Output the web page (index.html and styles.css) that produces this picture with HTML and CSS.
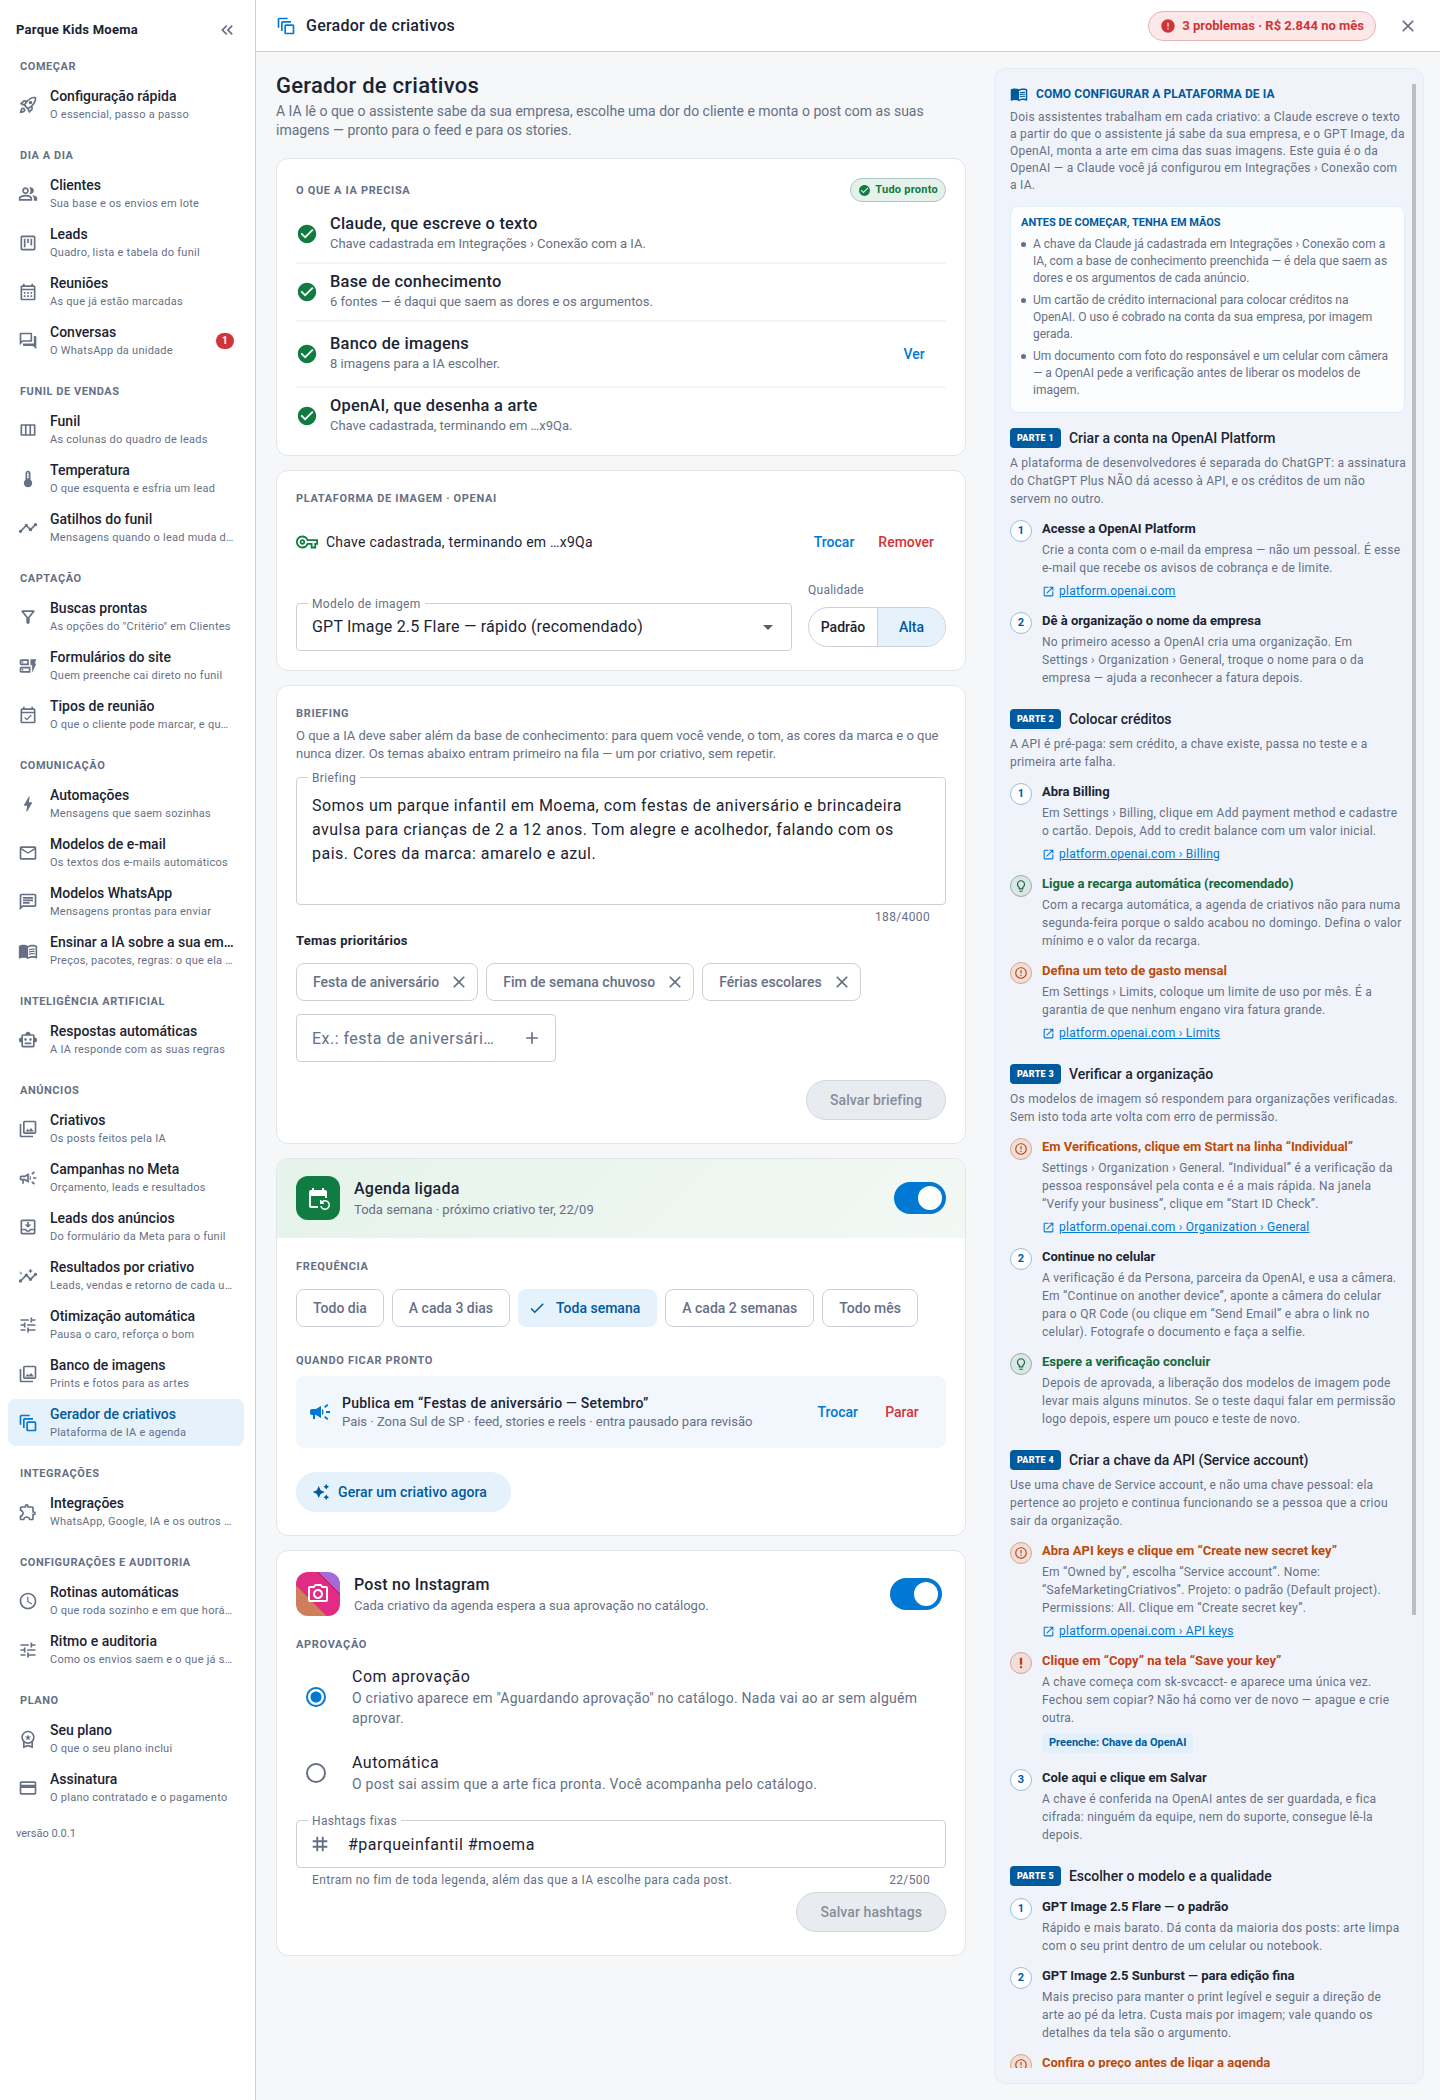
FILE: index.html
```
<!DOCTYPE html>
<html lang="pt-BR">
<head>
  <meta charset="UTF-8">
  <meta name="viewport" content="width=device-width, initial-scale=1">
  <title>Gerador de criativos</title>
  <link rel="stylesheet" href="styles.css">
</head>
<body>
  <svg class="sprite" aria-hidden="true">
    <symbol id="i-rocket" viewBox="0 0 24 24"><path d="M6 15c-.83 0-1.58.34-2.12.88C2.7 17.06 2 22 2 22s4.94-.7 6.12-1.88A2.996 2.996 0 0 0 6 15zm.71 3.71c-.28.28-2.17.76-2.17.76s.47-1.88.76-2.17c.17-.19.42-.3.7-.3a1.003 1.003 0 0 1 .71 1.71zM17.42 13.65c6.36-6.36 4.24-11.31 4.24-11.31S16.71.22 10.35 6.58l-2.49-.5a2.03 2.03 0 0 0-1.81.55L2 10.69l5 2.14L11.17 17l2.14 5 4.05-4.05c.47-.47.68-1.15.55-1.81l-.49-2.49zM7.41 10.83l-1.91-.82 1.97-1.97 1.44.29c-.57.83-1.08 1.7-1.5 2.5zm6.58 7.67l-.82-1.91c.8-.42 1.67-.93 2.49-1.5l.29 1.44-1.96 1.97zM16 12.24c-1.32 1.32-3.38 2.4-4.04 2.73l-2.93-2.93c.32-.65 1.4-2.71 2.73-4.04 4.68-4.68 8.23-3.99 8.23-3.99s.69 3.55-3.99 8.23zM15 11c1.1 0 2-.9 2-2s-.9-2-2-2-2 .9-2 2 .9 2 2 2z"/></symbol>
    <symbol id="i-group" viewBox="0 0 24 24"><path d="M16.67 13.13C18.04 14.06 19 15.32 19 17v3h4v-3c0-2.18-3.57-3.47-6.33-3.87zM15 12c2.21 0 4-1.79 4-4s-1.79-4-4-4c-.47 0-.91.1-1.33.24C14.5 5.27 15 6.58 15 8s-.5 2.73-1.33 3.76c.42.14.86.24 1.33.24zM9 12c2.21 0 4-1.79 4-4s-1.79-4-4-4-4 1.79-4 4 1.79 4 4 4zm0-6c1.1 0 2 .9 2 2s-.9 2-2 2-2-.9-2-2 .9-2 2-2zM9 13c-2.67 0-8 1.34-8 4v3h16v-3c0-2.66-5.33-4-8-4zm6 5H3v-.99C3.2 16.29 6.3 15 9 15s5.8 1.29 6 2v1z"/></symbol>
    <symbol id="i-kanban" viewBox="0 0 24 24"><path d="M19 3H5c-1.1 0-2 .9-2 2v14c0 1.1.9 2 2 2h14c1.1 0 2-.9 2-2V5c0-1.1-.9-2-2-2zm0 16H5V5h14v14zM7 7h2v10H7zM11 7h2v5h-2zM15 7h2v8h-2z"/></symbol>
    <symbol id="i-calendar" viewBox="0 0 24 24"><path d="M19 4h-1V2h-2v2H8V2H6v2H5c-1.11 0-1.99.9-1.99 2L3 20a2 2 0 0 0 2 2h14c1.1 0 2-.9 2-2V6c0-1.1-.9-2-2-2zm0 16H5V10h14v10zm0-12H5V6h14v2zM9 14H7v-2h2v2zm4 0h-2v-2h2v2zm4 0h-2v-2h2v2zm-8 4H7v-2h2v2zm4 0h-2v-2h2v2zm4 0h-2v-2h2v2z"/></symbol>
    <symbol id="i-forum" viewBox="0 0 24 24"><path d="M15 4v7H5.17L4 12.17V4h11m1-2H3c-.55 0-1 .45-1 1v14l4-4h10c.55 0 1-.45 1-1V3c0-.55-.45-1-1-1zm5 4h-2v9H6v2c0 .55.45 1 1 1h11l4 4V7c0-.55-.45-1-1-1z"/></symbol>
    <symbol id="i-columns" viewBox="0 0 24 24"><path fill-rule="evenodd" d="M4 5h16c.6 0 1 .4 1 1v12c0 .6-.4 1-1 1H4c-.6 0-1-.4-1-1V6c0-.6.4-1 1-1zm1 2v10h3.3V7zm5.3 0v10h3.4V7zm5.4 0v10H19V7z"/></symbol>
    <symbol id="i-thermo" viewBox="0 0 24 24"><path d="M15 13V5c0-1.66-1.34-3-3-3S9 3.34 9 5v8c-1.21.91-2 2.37-2 4 0 2.76 2.24 5 5 5s5-2.24 5-5c0-1.63-.79-3.09-2-4zm-4-8c0-.55.45-1 1-1s1 .45 1 1h-1v1h1v2h-1v1h1v2h-2V5z"/></symbol>
    <symbol id="i-timeline" viewBox="0 0 24 24"><path d="M23 8c0 1.1-.9 2-2 2-.18 0-.35-.02-.51-.07l-3.56 3.55c.05.16.07.34.07.52 0 1.1-.9 2-2 2s-2-.9-2-2c0-.18.02-.36.07-.52l-2.55-2.55c-.16.05-.34.07-.52.07s-.36-.02-.52-.07l-4.55 4.56c.05.16.07.33.07.51 0 1.1-.9 2-2 2s-2-.9-2-2 .9-2 2-2c.18 0 .35.02.51.07l4.56-4.55C8.02 9.36 8 9.18 8 9c0-1.1.9-2 2-2s2 .9 2 2c0 .18-.02.36-.07.52l2.55 2.55c.16-.05.34-.07.52-.07s.36.02.52.07l3.55-3.56C19.02 8.35 19 8.18 19 8c0-1.1.9-2 2-2s2 .9 2 2z"/></symbol>
    <symbol id="i-filter" viewBox="0 0 24 24"><path d="M7 6h10l-5.01 6.3L7 6zm-2.75-.39C6.27 8.2 10 13 10 13v6c0 .55.45 1 1 1h2c.55 0 1-.45 1-1v-6s3.72-4.8 5.74-7.39A.998.998 0 0 0 18.95 4H5.04c-.83 0-1.3.95-.79 1.61z"/></symbol>
    <symbol id="i-form" viewBox="0 0 24 24"><path fill-rule="evenodd" d="M17 20v-9h-2V4h7l-2 5h2zM15 13v7H4c-1.1 0-2-.9-2-2v-3c0-1.1.9-2 2-2zm-2 2H4v3h9zM13 4v7H4c-1.1 0-2-.9-2-2V6c0-1.1.9-2 2-2zm-2 2H4v3h7zM4.7 6.7h1.6v1.6H4.7zM4.7 15.7h1.6v1.6H4.7z"/></symbol>
    <symbol id="i-event" viewBox="0 0 24 24"><path d="M19 4h-1V2h-2v2H8V2H6v2H5c-1.11 0-1.99.9-1.99 2L3 20c0 1.1.89 2 2 2h14c1.1 0 2-.9 2-2V6c0-1.1-.9-2-2-2zm0 16H5V10h14v10zm0-12H5V6h14v2zm-8.44 10.5l5.94-5.94-1.06-1.06-4.88 4.88-2.12-2.12-1.06 1.06z"/></symbol>
    <symbol id="i-bolt" viewBox="0 0 24 24"><path d="M11 21h-1l1-7H7.5c-.58 0-.57-.32-.38-.66.19-.34.05-.08.07-.12C8.48 10.94 10.42 7.54 13 3h1l-1 7h3.5c.49 0 .56.33.47.51l-.07.15C12.96 17.55 11 21 11 21z"/></symbol>
    <symbol id="i-mail" viewBox="0 0 24 24"><path d="M22 6c0-1.1-.9-2-2-2H4c-1.1 0-2 .9-2 2v12c0 1.1.9 2 2 2h16c1.1 0 2-.9 2-2V6zm-2 0l-8 5-8-5h16zm0 12H4V8l8 5 8-5v10z"/></symbol>
    <symbol id="i-chat" viewBox="0 0 24 24"><path d="M4 4h16v12H5.17L4 17.17V4m0-2c-1.1 0-1.99.9-1.99 2L2 22l4-4h14c1.1 0 2-.9 2-2V4c0-1.1-.9-2-2-2H4zm2 10h8v2H6v-2zm0-3h12v2H6V9zm0-3h12v2H6V6z"/></symbol>
    <symbol id="i-book" viewBox="0 0 24 24"><path d="M21 5c-1.11-.35-2.33-.5-3.5-.5-1.95 0-4.05.4-5.5 1.5-1.45-1.1-3.55-1.5-5.5-1.5S2.45 4.9 1 6v14.65c0 .25.25.5.5.5.1 0 .15-.05.25-.05C3.1 20.45 5.05 20 6.5 20c1.95 0 4.05.4 5.5 1.5 1.35-.85 3.8-1.5 5.5-1.5 1.65 0 3.35.3 4.75 1.05.1.05.15.05.25.05.25 0 .5-.25.5-.5V6c-.6-.45-1.25-.75-2-1zm0 13.5c-1.1-.35-2.3-.5-3.5-.5-1.7 0-4.15.65-5.5 1.5V8c1.35-.85 3.8-1.5 5.5-1.5 1.2 0 2.4.15 3.5.5v11.5zM17.5 10.5c.88 0 1.73.09 2.5.26V9.24c-.79-.15-1.64-.24-2.5-.24-1.7 0-3.24.29-4.5.83v1.66c1.13-.64 2.7-.99 4.5-.99zM13 12.49v1.66c1.13-.64 2.7-.99 4.5-.99.88 0 1.73.09 2.5.26V11.9c-.79-.15-1.64-.24-2.5-.24-1.7 0-3.24.3-4.5.83zM17.5 14.33c-1.7 0-3.24.29-4.5.83v1.66c1.13-.64 2.7-.99 4.5-.99.88 0 1.73.09 2.5.26v-1.52c-.79-.16-1.64-.24-2.5-.24z"/></symbol>
    <symbol id="i-robot" viewBox="0 0 24 24"><path d="M20 9V7c0-1.1-.9-2-2-2h-3c0-1.66-1.34-3-3-3S9 3.34 9 5H6c-1.1 0-2 .9-2 2v2c-1.66 0-3 1.34-3 3s1.34 3 3 3v4c0 1.1.9 2 2 2h12c1.1 0 2-.9 2-2v-4c1.66 0 3-1.34 3-3s-1.34-3-3-3zm-2 10H6V7h12v12zm-9-6c-.83 0-1.5-.67-1.5-1.5S8.17 10 9 10s1.5.67 1.5 1.5S9.83 13 9 13zm7.5-1.5c0 .83-.67 1.5-1.5 1.5s-1.5-.67-1.5-1.5.67-1.5 1.5-1.5 1.5.67 1.5 1.5zM8 15h8v2H8v-2z"/></symbol>
    <symbol id="i-photos" viewBox="0 0 24 24"><path d="M20 4v12H8V4h12m0-2H8c-1.1 0-2 .9-2 2v12c0 1.1.9 2 2 2h12c1.1 0 2-.9 2-2V4c0-1.1-.9-2-2-2zm-8.5 9.67l1.69 2.26 2.48-3.1L19 15H9zM2 6v14c0 1.1.9 2 2 2h14v-2H4V6H2z"/></symbol>
    <symbol id="i-campaign" viewBox="0 0 24 24"><path d="M18 11v2h4v-2h-4zM16 17.61c.96.71 2.21 1.65 3.2 2.39.4-.53.8-1.07 1.2-1.6-.99-.74-2.24-1.68-3.2-2.4-.4.54-.8 1.08-1.2 1.61zM20.4 5.6c-.4-.53-.8-1.07-1.2-1.6-.99.74-2.24 1.68-3.2 2.4.4.53.8 1.07 1.2 1.6.96-.72 2.21-1.65 3.2-2.4zM4 9c-1.1 0-2 .9-2 2v2c0 1.1.9 2 2 2h1v4h2v-4h1l5 3V6L8 9H4zm5.03 1.71L11 9.53v4.94l-1.97-1.18-.48-.29H4v-2h4.55l.48-.29zM15.5 12c0-1.33-.58-2.53-1.5-3.35v6.69c.92-.81 1.5-2.01 1.5-3.34z"/></symbol>
    <symbol id="i-campaign-fill" viewBox="0 0 24 24"><path d="M18 11v2h4v-2h-4zM16 17.61c.96.71 2.21 1.65 3.2 2.39.4-.53.8-1.07 1.2-1.6-.99-.74-2.24-1.68-3.2-2.4-.4.54-.8 1.08-1.2 1.61zM20.4 5.6c-.4-.53-.8-1.07-1.2-1.6-.99.74-2.24 1.68-3.2 2.4.4.53.8 1.07 1.2 1.6.96-.72 2.21-1.65 3.2-2.4zM4 9c-1.1 0-2 .9-2 2v2c0 1.1.9 2 2 2h1v4h2v-4h1l5 3V6L8 9H4zM15.5 12c0-1.33-.58-2.53-1.5-3.35v6.69c.92-.81 1.5-2.01 1.5-3.34z"/></symbol>
    <symbol id="i-inbox" viewBox="0 0 24 24"><path d="M19 3H5c-1.1 0-2 .9-2 2v14c0 1.1.9 2 2 2h14c1.1 0 2-.9 2-2V5c0-1.1-.9-2-2-2zm0 16H5v-3h3.56c.69 1.19 1.97 2 3.45 2s2.75-.81 3.45-2H19v3zm0-5h-4.99c0 1.1-.9 2-2 2s-2-.9-2-2H5V5h14v9zM16 9h-3V6h-2v3H8l4 4z"/></symbol>
    <symbol id="i-insights" viewBox="0 0 24 24"><path d="M21 8c-1.45 0-2.26 1.44-1.93 2.51l-3.55 3.56c-.3-.09-.74-.09-1.04 0l-2.55-2.55C12.27 10.45 11.46 9 10 9c-1.45 0-2.27 1.44-1.93 2.52l-4.56 4.55C2.44 15.74 1 16.55 1 18c0 1.1.9 2 2 2 1.45 0 2.26-1.44 1.93-2.51l4.55-4.56c.3.09.74.09 1.04 0l2.55 2.55C12.73 16.55 13.54 18 15 18c1.45 0 2.27-1.44 1.93-2.52l3.56-3.55c1.07.33 2.51-.48 2.51-1.93 0-1.1-.9-2-2-2zM15 9l.94-2.07L18 6l-2.06-.93L15 3l-.92 2.07L12 6l2.08.93zM3.5 11L4 9l2-.5L4 8l-.5-2L3 8l-2 .5L3 9z"/></symbol>
    <symbol id="i-tune" viewBox="0 0 24 24"><path d="M3 17v2h6v-2H3zM3 5v2h10V5H3zm10 16v-2h8v-2h-8v-2h-2v6h2zM7 9v2H3v2h4v2h2V9H7zm14 4v-2H11v2h10zm-6-4h2V7h4V5h-4V3h-2v6z"/></symbol>
    <symbol id="i-motion" viewBox="0 0 24 24"><path d="M14 2H4c-1.1 0-2 .9-2 2v10h2V4h10V2zm4 4H8c-1.1 0-2 .9-2 2v10h2V8h10V6zm2 4h-8c-1.1 0-2 .9-2 2v8c0 1.1.9 2 2 2h8c1.1 0 2-.9 2-2v-8c0-1.1-.9-2-2-2zm0 10h-8v-8h8v8z"/></symbol>
    <symbol id="i-extension" viewBox="0 0 24 24"><path d="M10.5 4.5c.28 0 .5.22.5.5v2h6v6h2c.28 0 .5.22.5.5s-.22.5-.5.5h-2v6h-2.12c-.68-1.75-2.39-3-4.38-3s-3.7 1.25-4.38 3H4v-2.12c1.75-.68 3-2.39 3-4.38 0-1.99-1.24-3.7-2.99-4.38L4 7h6V5c0-.28.22-.5.5-.5m0-2C9.12 2.5 8 3.62 8 5H4c-1.1 0-1.99.9-1.99 2v3.8h.29c1.49 0 2.7 1.21 2.7 2.7s-1.21 2.7-2.7 2.7H2V20c0 1.1.9 2 2 2h3.8v-.3c0-1.49 1.21-2.7 2.7-2.7s2.7 1.21 2.7 2.7v.3H17c1.1 0 2-.9 2-2v-4c1.38 0 2.5-1.12 2.5-2.5S20.38 11 19 11V7c0-1.1-.9-2-2-2h-4c0-1.38-1.12-2.5-2.5-2.5z"/></symbol>
    <symbol id="i-clock" viewBox="0 0 24 24"><path d="M11.99 2C6.47 2 2 6.48 2 12s4.47 10 9.99 10C17.52 22 22 17.52 22 12S17.52 2 11.99 2zM12 20c-4.42 0-8-3.58-8-8s3.58-8 8-8 8 3.58 8 8-3.58 8-8 8zm.5-13H11v6l5.25 3.15.75-1.23-4.5-2.67z"/></symbol>
    <symbol id="i-premium" viewBox="0 0 24 24"><path d="M9.68 13.69L12 11.93l2.31 1.76-.88-2.85L15.75 9h-2.84L12 6.19 11.09 9H8.25l2.31 1.84-.88 2.85zM20 10c0-4.42-3.58-8-8-8s-8 3.58-8 8c0 2.03.76 3.87 2 5.28V23l6-2 6 2v-7.72A7.96 7.96 0 0 0 20 10zm-8-6c3.31 0 6 2.69 6 6s-2.69 6-6 6-6-2.69-6-6 2.69-6 6-6zm0 15l-4 1.02v-3.1c1.18.68 2.54 1.08 4 1.08s2.82-.4 4-1.08v3.1L12 19z"/></symbol>
    <symbol id="i-card" viewBox="0 0 24 24"><path d="M20 4H4c-1.11 0-1.99.89-1.99 2L2 18c0 1.11.89 2 2 2h16c1.11 0 2-.89 2-2V6c0-1.11-.89-2-2-2zm0 14H4v-6h16v6zm0-10H4V6h16v2z"/></symbol>
    <symbol id="i-collapse" viewBox="0 0 24 24"><path d="M17.59 18L19 16.59 14.42 12 19 7.41 17.59 6l-6 6zM11 18l1.41-1.41L7.83 12l4.58-4.59L11 6l-6 6z"/></symbol>
    <symbol id="i-error" viewBox="0 0 24 24"><path d="M12 2C6.48 2 2 6.48 2 12s4.48 10 10 10 10-4.48 10-10S17.52 2 12 2zm1 15h-2v-2h2v2zm0-4h-2V7h2v6z"/></symbol>
    <symbol id="i-error-out" viewBox="0 0 24 24"><path d="M11 15h2v2h-2v-2zm0-8h2v6h-2V7zm.99-5C6.47 2 2 6.48 2 12s4.47 10 9.99 10C17.52 22 22 17.52 22 12S17.52 2 11.99 2zM12 20c-4.42 0-8-3.58-8-8s3.58-8 8-8 8 3.58 8 8-3.58 8-8 8z"/></symbol>
    <symbol id="i-close" viewBox="0 0 24 24"><path d="M19 6.41L17.59 5 12 10.59 6.41 5 5 6.41 10.59 12 5 17.59 6.41 19 12 13.41 17.59 19 19 17.59 13.41 12z"/></symbol>
    <symbol id="i-ok" viewBox="0 0 24 24"><path d="M12 2C6.48 2 2 6.48 2 12s4.48 10 10 10 10-4.48 10-10S17.52 2 12 2zm-2 15l-5-5 1.41-1.41L10 14.17l7.59-7.59L19 8l-9 9z"/></symbol>
    <symbol id="i-key" viewBox="0 0 24 24"><path d="M22 19h-6v-4h-2.68c-1.14 2.42-3.6 4-6.32 4-3.86 0-7-3.14-7-7s3.14-7 7-7c2.72 0 5.17 1.58 6.32 4H24v6h-2v4zm-4-2h2v-4h2v-2H11.94l-.23-.67C11.01 8.34 9.11 7 7 7c-2.76 0-5 2.24-5 5s2.24 5 5 5c2.11 0 4.01-1.34 4.71-3.33l.23-.67H18v4zM7 15c-1.65 0-3-1.35-3-3s1.35-3 3-3 3 1.35 3 3-1.35 3-3 3zm0-4c-.55 0-1 .45-1 1s.45 1 1 1 1-.45 1-1-.45-1-1-1z"/></symbol>
    <symbol id="i-add" viewBox="0 0 24 24"><path d="M19 13h-6v6h-2v-6H5v-2h6V5h2v6h6v2z"/></symbol>
    <symbol id="i-down" viewBox="0 0 24 24"><path d="M7 10l5 5 5-5z"/></symbol>
    <symbol id="i-repeat" viewBox="0 0 24 24"><path d="M21 12V6c0-1.1-.9-2-2-2h-1V2h-2v2H8V2H6v2H5c-1.1 0-2 .9-2 2v14c0 1.1.9 2 2 2h7v-2H5V10h14v2h2zm-5.36 8c.43 1.45 1.77 2.5 3.36 2.5 1.93 0 3.5-1.57 3.5-3.5s-1.57-3.5-3.5-3.5c-.95 0-1.82.38-2.45 1H18V18h-4v-4h1.5v1.43c.9-.88 2.14-1.43 3.5-1.43 2.76 0 5 2.24 5 5s-2.24 5-5 5c-2.42 0-4.44-1.72-4.9-4h1.54z"/></symbol>
    <symbol id="i-sparkle" viewBox="0 0 24 24"><path d="M19 9l1.25-2.75L23 5l-2.75-1.25L19 1l-1.25 2.75L15 5l2.75 1.25L19 9zm-7.5.5L9 4 6.5 9.5 1 12l5.5 2.5L9 20l2.5-5.5L17 12l-5.5-2.5zM19 15l-1.25 2.75L15 19l2.75 1.25L19 23l1.25-2.75L23 19l-2.75-1.25L19 15z"/></symbol>
    <symbol id="i-check" viewBox="0 0 24 24"><path d="M9 16.17L4.83 12l-1.42 1.41L9 19 21 7l-1.41-1.41z"/></symbol>
    <symbol id="i-camera" viewBox="0 0 24 24"><path d="M14.12 4l1.83 2H20v12H4V6h4.05l1.83-2h4.24M15 2H9L7.17 4H4c-1.1 0-2 .9-2 2v12c0 1.1.9 2 2 2h16c1.1 0 2-.9 2-2V6c0-1.1-.9-2-2-2h-3.17L15 2zm-3 7c1.65 0 3 1.35 3 3s-1.35 3-3 3-3-1.35-3-3 1.35-3 3-3m0-2c-2.76 0-5 2.24-5 5s2.24 5 5 5 5-2.24 5-5-2.24-5-5-5z"/></symbol>
    <symbol id="i-tag" viewBox="0 0 24 24"><path d="M20 10V8h-4V4h-2v4h-4V4H8v4H4v2h4v4H4v2h4v4h2v-4h4v4h2v-4h4v-2h-4v-4h4zm-6 4h-4v-4h4v4z"/></symbol>
    <symbol id="i-open" viewBox="0 0 24 24"><path d="M19 19H5V5h7V3H5a2 2 0 0 0-2 2v14a2 2 0 0 0 2 2h14c1.1 0 2-.9 2-2v-7h-2v7zM14 3v2h3.59l-9.83 9.83 1.41 1.41L19 6.41V10h2V3h-7z"/></symbol>
    <symbol id="i-bulb" viewBox="0 0 24 24"><path d="M9 21c0 .55.45 1 1 1h4c.55 0 1-.45 1-1v-1H9v1zm3-19C8.14 2 5 5.14 5 9c0 2.38 1.19 4.47 3 5.74V17c0 .55.45 1 1 1h6c.55 0 1-.45 1-1v-2.26c1.81-1.27 3-3.36 3-5.74 0-3.86-3.14-7-7-7zm2.85 11.1l-.85.6V16h-4v-2.3l-.85-.6A4.997 4.997 0 0 1 7 9c0-2.76 2.24-5 5-5s5 2.24 5 5c0 1.63-.8 3.16-2.15 4.1z"/></symbol>
    <symbol id="i-bang" viewBox="0 0 24 24"><circle cx="12" cy="19" r="2"/><path d="M10 3h4v12h-4z"/></symbol>
  </svg>

  <div class="app">
    <aside class="sidebar">
      <div class="brand">
        <strong>Parque Kids Moema</strong>
        <button class="icon-btn" type="button" aria-label="Recolher menu"><svg class="icon"><use href="#i-collapse"/></svg></button>
      </div>
      <nav class="nav">
        <h2>COMEÇAR</h2>
        <a href="#"><svg class="icon"><use href="#i-rocket"/></svg><span class="nav-text"><b>Configuração rápida</b><small>O essencial, passo a passo</small></span></a>

        <h2>DIA A DIA</h2>
        <a href="#"><svg class="icon"><use href="#i-group"/></svg><span class="nav-text"><b>Clientes</b><small>Sua base e os envios em lote</small></span></a>
        <a href="#"><svg class="icon"><use href="#i-kanban"/></svg><span class="nav-text"><b>Leads</b><small>Quadro, lista e tabela do funil</small></span></a>
        <a href="#"><svg class="icon"><use href="#i-calendar"/></svg><span class="nav-text"><b>Reuniões</b><small>As que já estão marcadas</small></span></a>
        <a href="#"><svg class="icon"><use href="#i-forum"/></svg><span class="nav-text"><b>Conversas</b><small>O WhatsApp da unidade</small></span><span class="count">1</span></a>

        <h2>FUNIL DE VENDAS</h2>
        <a href="#"><svg class="icon"><use href="#i-columns"/></svg><span class="nav-text"><b>Funil</b><small>As colunas do quadro de leads</small></span></a>
        <a href="#"><svg class="icon"><use href="#i-thermo"/></svg><span class="nav-text"><b>Temperatura</b><small>O que esquenta e esfria um lead</small></span></a>
        <a href="#"><svg class="icon"><use href="#i-timeline"/></svg><span class="nav-text"><b>Gatilhos do funil</b><small>Mensagens quando o lead muda d…</small></span></a>

        <h2>CAPTAÇÃO</h2>
        <a href="#"><svg class="icon"><use href="#i-filter"/></svg><span class="nav-text"><b>Buscas prontas</b><small>As opções do "Critério" em Clientes</small></span></a>
        <a href="#"><svg class="icon"><use href="#i-form"/></svg><span class="nav-text"><b>Formulários do site</b><small>Quem preenche cai direto no funil</small></span></a>
        <a href="#"><svg class="icon"><use href="#i-event"/></svg><span class="nav-text"><b>Tipos de reunião</b><small>O que o cliente pode marcar, e qu…</small></span></a>

        <h2>COMUNICAÇÃO</h2>
        <a href="#"><svg class="icon"><use href="#i-bolt"/></svg><span class="nav-text"><b>Automações</b><small>Mensagens que saem sozinhas</small></span></a>
        <a href="#"><svg class="icon"><use href="#i-mail"/></svg><span class="nav-text"><b>Modelos de e-mail</b><small>Os textos dos e-mails automáticos</small></span></a>
        <a href="#"><svg class="icon"><use href="#i-chat"/></svg><span class="nav-text"><b>Modelos WhatsApp</b><small>Mensagens prontas para enviar</small></span></a>
        <a href="#"><svg class="icon"><use href="#i-book"/></svg><span class="nav-text"><b>Ensinar a IA sobre a sua em…</b><small>Preços, pacotes, regras: o que ela …</small></span></a>

        <h2>INTELIGÊNCIA ARTIFICIAL</h2>
        <a href="#"><svg class="icon"><use href="#i-robot"/></svg><span class="nav-text"><b>Respostas automáticas</b><small>A IA responde com as suas regras</small></span></a>

        <h2>ANÚNCIOS</h2>
        <a href="#"><svg class="icon"><use href="#i-photos"/></svg><span class="nav-text"><b>Criativos</b><small>Os posts feitos pela IA</small></span></a>
        <a href="#"><svg class="icon"><use href="#i-campaign"/></svg><span class="nav-text"><b>Campanhas no Meta</b><small>Orçamento, leads e resultados</small></span></a>
        <a href="#"><svg class="icon"><use href="#i-inbox"/></svg><span class="nav-text"><b>Leads dos anúncios</b><small>Do formulário da Meta para o funil</small></span></a>
        <a href="#"><svg class="icon"><use href="#i-insights"/></svg><span class="nav-text"><b>Resultados por criativo</b><small>Leads, vendas e retorno de cada u…</small></span></a>
        <a href="#"><svg class="icon"><use href="#i-tune"/></svg><span class="nav-text"><b>Otimização automática</b><small>Pausa o caro, reforça o bom</small></span></a>
        <a href="#"><svg class="icon"><use href="#i-photos"/></svg><span class="nav-text"><b>Banco de imagens</b><small>Prints e fotos para as artes</small></span></a>
        <a href="#" class="active" aria-current="page"><svg class="icon"><use href="#i-motion"/></svg><span class="nav-text"><b>Gerador de criativos</b><small>Plataforma de IA e agenda</small></span></a>

        <h2>INTEGRAÇÕES</h2>
        <a href="#"><svg class="icon"><use href="#i-extension"/></svg><span class="nav-text"><b>Integrações</b><small>WhatsApp, Google, IA e os outros …</small></span></a>

        <h2>CONFIGURAÇÕES E AUDITORIA</h2>
        <a href="#"><svg class="icon"><use href="#i-clock"/></svg><span class="nav-text"><b>Rotinas automáticas</b><small>O que roda sozinho e em que horá…</small></span></a>
        <a href="#"><svg class="icon"><use href="#i-tune"/></svg><span class="nav-text"><b>Ritmo e auditoria</b><small>Como os envios saem e o que já s…</small></span></a>

        <h2>PLANO</h2>
        <a href="#"><svg class="icon"><use href="#i-premium"/></svg><span class="nav-text"><b>Seu plano</b><small>O que o seu plano inclui</small></span></a>
        <a href="#"><svg class="icon"><use href="#i-card"/></svg><span class="nav-text"><b>Assinatura</b><small>O plano contratado e o pagamento</small></span></a>
      </nav>
      <p class="version">versão 0.0.1</p>
    </aside>

    <div class="shell">
      <header class="topbar">
        <svg class="icon"><use href="#i-motion"/></svg>
        <span class="topbar-title">Gerador de criativos</span>
        <button class="alert-pill" type="button"><svg class="icon"><use href="#i-error"/></svg>3 problemas · R$ 2.844 no mês</button>
        <button class="icon-btn" type="button" aria-label="Fechar"><svg class="icon"><use href="#i-close"/></svg></button>
      </header>

      <div class="page">
        <main class="main">
          <h1>Gerador de criativos</h1>
          <p class="lead">A IA lê o que o assistente sabe da sua empresa, escolhe uma dor do cliente e monta o post com as suas imagens — pronto para o feed e para os stories.</p>

          <section class="card needs">
            <div class="needs-head">
              <h2 class="label">O QUE A IA PRECISA</h2>
              <span class="ready"><svg class="icon"><use href="#i-ok"/></svg>Tudo pronto</span>
            </div>
            <ul>
              <li><svg class="icon"><use href="#i-ok"/></svg><div class="grow"><h3>Claude, que escreve o texto</h3><p>Chave cadastrada em Integrações › Conexão com a IA.</p></div></li>
              <li><svg class="icon"><use href="#i-ok"/></svg><div class="grow"><h3>Base de conhecimento</h3><p>6 fontes — é daqui que saem as dores e os argumentos.</p></div></li>
              <li><svg class="icon"><use href="#i-ok"/></svg><div class="grow"><h3>Banco de imagens</h3><p>8 imagens para a IA escolher.</p></div><button class="text-btn" type="button">Ver</button></li>
              <li><svg class="icon"><use href="#i-ok"/></svg><div class="grow"><h3>OpenAI, que desenha a arte</h3><p>Chave cadastrada, terminando em …x9Qa.</p></div></li>
            </ul>
          </section>

          <section class="card">
            <h2 class="label">PLATAFORMA DE IMAGEM · OPENAI</h2>
            <div class="key-row">
              <svg class="icon"><use href="#i-key"/></svg>
              <span class="grow">Chave cadastrada, terminando em …x9Qa</span>
              <button class="text-btn" type="button">Trocar</button>
              <button class="text-btn danger" type="button">Remover</button>
            </div>
            <div class="model-row">
              <div class="field grow">
                <label for="modelo">Modelo de imagem</label>
                <select id="modelo"><option>GPT Image 2.5 Flare — rápido (recomendado)</option></select>
                <svg class="icon arrow"><use href="#i-down"/></svg>
              </div>
              <div class="quality">
                <span id="qualidade">Qualidade</span>
                <div class="toggle" role="group" aria-labelledby="qualidade">
                  <button type="button" aria-pressed="false">Padrão</button>
                  <button type="button" aria-pressed="true">Alta</button>
                </div>
              </div>
            </div>
          </section>

          <section class="card roomy">
            <h2 class="label">BRIEFING</h2>
            <p class="hint">O que a IA deve saber além da base de conhecimento: para quem você vende, o tom, as cores da marca e o que nunca dizer. Os temas abaixo entram primeiro na fila — um por criativo, sem repetir.</p>
            <div class="field">
              <label for="briefing">Briefing</label>
              <textarea id="briefing">Somos um parque infantil em Moema, com festas de aniversário e brincadeira avulsa para crianças de 2 a 12 anos. Tom alegre e acolhedor, falando com os pais. Cores da marca: amarelo e azul.</textarea>
            </div>
            <p class="helper"><span>188/4000</span></p>
            <h3 class="themes-title">Temas prioritários</h3>
            <ul class="chips">
              <li class="chip removable">Festa de aniversário<button type="button" aria-label="Remover Festa de aniversário"><svg class="icon"><use href="#i-close"/></svg></button></li>
              <li class="chip removable">Fim de semana chuvoso<button type="button" aria-label="Remover Fim de semana chuvoso"><svg class="icon"><use href="#i-close"/></svg></button></li>
              <li class="chip removable">Férias escolares<button type="button" aria-label="Remover Férias escolares"><svg class="icon"><use href="#i-close"/></svg></button></li>
            </ul>
            <div class="field new-theme">
              <input type="text" aria-label="Novo tema" placeholder="Ex.: festa de aniversári…">
              <button type="button" aria-label="Adicionar tema"><svg class="icon"><use href="#i-add"/></svg></button>
            </div>
            <div class="actions"><button class="pill-btn" type="button" disabled>Salvar briefing</button></div>
          </section>

          <section class="card schedule">
            <div class="feature schedule-head">
              <span class="tile green"><svg class="icon"><use href="#i-repeat"/></svg></span>
              <div class="grow">
                <h2>Agenda ligada</h2>
                <p>Toda semana · próximo criativo ter, 22/09</p>
              </div>
              <input class="switch" type="checkbox" role="switch" aria-label="Agenda ligada" checked>
            </div>
            <div class="schedule-body">
              <h3 class="label">FREQUÊNCIA</h3>
              <div class="chips freq">
                <button class="chip" type="button">Todo dia</button>
                <button class="chip" type="button">A cada 3 dias</button>
                <button class="chip selected" type="button" aria-pressed="true"><svg class="icon"><use href="#i-check"/></svg>Toda semana</button>
                <button class="chip" type="button">A cada 2 semanas</button>
                <button class="chip" type="button">Todo mês</button>
              </div>
              <h3 class="label">QUANDO FICAR PRONTO</h3>
              <div class="publish">
                <svg class="icon"><use href="#i-campaign-fill"/></svg>
                <div class="grow">
                  <h4>Publica em “Festas de aniversário — Setembro”</h4>
                  <p>Pais · Zona Sul de SP · feed, stories e reels · entra pausado para revisão</p>
                </div>
                <button class="text-btn" type="button">Trocar</button>
                <button class="text-btn danger" type="button">Parar</button>
              </div>
              <button class="pill-btn tonal" type="button"><svg class="icon"><use href="#i-sparkle"/></svg>Gerar um criativo agora</button>
            </div>
          </section>

          <section class="card roomy instagram">
            <div class="feature">
              <span class="tile insta"><svg class="icon"><use href="#i-camera"/></svg></span>
              <div class="grow">
                <h2>Post no Instagram</h2>
                <p>Cada criativo da agenda espera a sua aprovação no catálogo.</p>
              </div>
              <input class="switch" type="checkbox" role="switch" aria-label="Post no Instagram" checked>
            </div>
            <h3 class="label">APROVAÇÃO</h3>
            <label class="option">
              <input type="radio" name="aprovacao" checked>
              <span><b>Com aprovação</b><small>O criativo aparece em "Aguardando aprovação" no catálogo. Nada vai ao ar sem alguém aprovar.</small></span>
            </label>
            <label class="option">
              <input type="radio" name="aprovacao">
              <span><b>Automática</b><small>O post sai assim que a arte fica pronta. Você acompanha pelo catálogo.</small></span>
            </label>
            <div class="field hashtags">
              <label for="hashtags">Hashtags fixas</label>
              <svg class="icon"><use href="#i-tag"/></svg>
              <input id="hashtags" type="text" value="#parqueinfantil #moema">
            </div>
            <p class="helper"><span>Entram no fim de toda legenda, além das que a IA escolhe para cada post.</span><span>22/500</span></p>
            <div class="actions"><button class="pill-btn" type="button" disabled>Salvar hashtags</button></div>
          </section>
        </main>

        <aside class="guide">
          <div class="guide-scroll">
            <h2 class="guide-title"><svg class="icon"><use href="#i-book"/></svg>COMO CONFIGURAR A PLATAFORMA DE IA</h2>
            <p class="guide-intro">Dois assistentes trabalham em cada criativo: a Claude escreve o texto a partir do que o assistente já sabe da sua empresa, e o GPT Image, da OpenAI, monta a arte em cima das suas imagens. Este guia é o da OpenAI — a Claude você já configurou em Integrações › Conexão com a IA.</p>
            <div class="before">
              <h3>ANTES DE COMEÇAR, TENHA EM MÃOS</h3>
              <ul>
                <li>A chave da Claude já cadastrada em Integrações › Conexão com a IA, com a base de conhecimento preenchida — é dela que saem as dores e os argumentos de cada anúncio.</li>
                <li>Um cartão de crédito internacional para colocar créditos na OpenAI. O uso é cobrado na conta da sua empresa, por imagem gerada.</li>
                <li>Um documento com foto do responsável e um celular com câmera — a OpenAI pede a verificação antes de liberar os modelos de imagem.</li>
              </ul>
            </div>

            <section class="part">
              <h3><span class="part-tag">PARTE 1</span>Criar a conta na OpenAI Platform</h3>
              <p>A plataforma de desenvolvedores é separada do ChatGPT: a assinatura do ChatGPT Plus NÃO dá acesso à API, e os créditos de um não servem no outro.</p>
              <div class="step"><span class="dot">1</span><div>
                <h4>Acesse a OpenAI Platform</h4>
                <p>Crie a conta com o e-mail da empresa — não um pessoal. É esse e-mail que recebe os avisos de cobrança e de limite.</p>
                <a href="#"><svg class="icon"><use href="#i-open"/></svg><span>platform.openai.com</span></a>
              </div></div>
              <div class="step"><span class="dot">2</span><div>
                <h4>Dê à organização o nome da empresa</h4>
                <p>No primeiro acesso a OpenAI cria uma organização. Em Settings&nbsp;› Organization › General, troque o nome para o da empresa — ajuda a reconhecer a fatura depois.</p>
              </div></div>
            </section>

            <section class="part">
              <h3><span class="part-tag">PARTE 2</span>Colocar créditos</h3>
              <p>A API é pré-paga: sem crédito, a chave existe, passa no teste e a primeira arte falha.</p>
              <div class="step"><span class="dot">1</span><div>
                <h4>Abra Billing</h4>
                <p>Em Settings › Billing, clique em Add payment method e cadastre o cartão. Depois, Add to credit balance com um valor inicial.</p>
                <a href="#"><svg class="icon"><use href="#i-open"/></svg><span>platform.openai.com › Billing</span></a>
              </div></div>
              <div class="step tip"><span class="dot"><svg class="icon"><use href="#i-bulb"/></svg></span><div>
                <h4>Ligue a recarga automática (recomendado)</h4>
                <p>Com a recarga automática, a agenda de criativos não para numa segunda-feira porque o saldo acabou no domingo. Defina o valor mínimo e o valor da recarga.</p>
              </div></div>
              <div class="step warn"><span class="dot"><svg class="icon"><use href="#i-error-out"/></svg></span><div>
                <h4>Defina um teto de gasto mensal</h4>
                <p>Em Settings › Limits, coloque um limite de uso por mês. É a garantia de que nenhum engano vira fatura grande.</p>
                <a href="#"><svg class="icon"><use href="#i-open"/></svg><span>platform.openai.com › Limits</span></a>
              </div></div>
            </section>

            <section class="part">
              <h3><span class="part-tag">PARTE 3</span>Verificar a organização</h3>
              <p>Os modelos de imagem só respondem para organizações verificadas. Sem isto toda arte volta com erro de permissão.</p>
              <div class="step warn"><span class="dot"><svg class="icon"><use href="#i-error-out"/></svg></span><div>
                <h4>Em Verifications, clique em Start na linha “Individual”</h4>
                <p>Settings › Organization › General. “Individual” é a verificação da pessoa responsável pela conta e é a mais rápida. Na janela “Verify your business”, clique em “Start ID Check”.</p>
                <a href="#"><svg class="icon"><use href="#i-open"/></svg><span>platform.openai.com › Organization › General</span></a>
              </div></div>
              <div class="step"><span class="dot">2</span><div>
                <h4>Continue no celular</h4>
                <p>A verificação é da Persona, parceira da OpenAI, e usa a câmera. Em “Continue on another device”, aponte a câmera do celular para o QR Code (ou clique em “Send Email” e abra o link no celular). Fotografe o documento e faça a selfie.</p>
              </div></div>
              <div class="step tip"><span class="dot"><svg class="icon"><use href="#i-bulb"/></svg></span><div>
                <h4>Espere a verificação concluir</h4>
                <p>Depois de aprovada, a liberação dos modelos de imagem pode levar mais alguns minutos. Se o teste daqui falar em permissão logo depois, espere um pouco e teste de novo.</p>
              </div></div>
            </section>

            <section class="part">
              <h3><span class="part-tag">PARTE 4</span>Criar a chave da API (Service account)</h3>
              <p>Use uma chave de Service account, e não uma chave pessoal: ela pertence ao projeto e continua funcionando se a pessoa que a criou sair da organização.</p>
              <div class="step warn"><span class="dot"><svg class="icon"><use href="#i-error-out"/></svg></span><div>
                <h4>Abra API keys e clique em “Create new secret key”</h4>
                <p>Em “Owned by”, escolha “Service account”. Nome: “SafeMarketingCriativos”. Projeto: o padrão (Default project). Permissions: All. Clique em “Create secret key”.</p>
                <a href="#"><svg class="icon"><use href="#i-open"/></svg><span>platform.openai.com › API keys</span></a>
              </div></div>
              <div class="step critical"><span class="dot"><svg class="icon"><use href="#i-bang"/></svg></span><div>
                <h4>Clique em “Copy” na tela “Save your key”</h4>
                <p>A chave começa com sk-svcacct- e aparece uma única vez. Fechou sem copiar? Não há como ver de novo — apague e crie outra.</p>
                <span class="fills">Preenche: Chave da OpenAI</span>
              </div></div>
              <div class="step"><span class="dot">3</span><div>
                <h4>Cole aqui e clique em Salvar</h4>
                <p>A chave é conferida na OpenAI antes de ser guardada, e fica cifrada: ninguém da equipe, nem do suporte, consegue lê-la depois.</p>
              </div></div>
            </section>

            <section class="part">
              <h3><span class="part-tag">PARTE 5</span>Escolher o modelo e a qualidade</h3>
              <div class="step"><span class="dot">1</span><div>
                <h4>GPT Image 2.5 Flare — o padrão</h4>
                <p>Rápido e mais barato. Dá conta da maioria dos posts: arte limpa com o seu print dentro de um celular ou notebook.</p>
              </div></div>
              <div class="step"><span class="dot">2</span><div>
                <h4>GPT Image 2.5 Sunburst — para edição fina</h4>
                <p>Mais preciso para manter o print legível e seguir a direção de arte ao pé da letra. Custa mais por imagem; vale quando os detalhes da tela são o argumento.</p>
              </div></div>
              <div class="step warn"><span class="dot"><svg class="icon"><use href="#i-error-out"/></svg></span><div>
                <h4>Confira o preço antes de ligar a agenda</h4>
              </div></div>
            </section>
          </div>
          <span class="guide-bar"></span>
        </aside>
      </div>
    </div>
  </div>
</body>
</html>
```
FILE: styles.css
```
:root {
  --ink: #1b2433;
  --muted: #667085;
  --primary: #0078d4;
  --primary-dark: #005a9e;
  --primary-soft: #e5f1fb;
  --green: #107c41;
  --red: #d13438;
  --orange: #bc4b09;
  --line: #e2e5ea;
  --outline: #cdd0d9;
  --page: #f5f7f9;
}
* {
  box-sizing: border-box;
}
body {
  margin: 0;
  background: var(--page);
  color: var(--ink);
  font-family: Roboto, "Liberation Sans", sans-serif;
  font-size: 14px;
  line-height: 20px;
  letter-spacing: 0.018em;
}
h1, h2, h3, h4, p, ul {
  margin: 0;
  padding: 0;
  font-weight: 400;
}
ul {
  list-style: none;
}
button, input, select, textarea {
  font: inherit;
  letter-spacing: inherit;
  color: inherit;
  margin: 0;
}
button {
  border: 0;
  background: none;
  padding: 0;
  cursor: pointer;
}
.sprite {
  display: none;
}
.icon {
  width: 20px;
  height: 20px;
  flex: none;
  fill: currentColor;
  display: block;
}
.grow {
  flex: 1;
  min-width: 0;
}
.icon-btn {
  color: var(--muted);
}

.app {
  display: grid;
  grid-template-columns: 256px 1fr;
  min-height: 100vh;
}

/* sidebar */
.sidebar {
  background: #fff;
  border-right: 1px solid var(--outline);
  padding: 18px 11px 16px 8px;
}
.brand {
  display: flex;
  align-items: center;
  justify-content: space-between;
  padding: 0 7px 0 8px;
  height: 23px;
}
.brand strong {
  padding-top: 1px;
  font-size: 13px;
  font-weight: 700;
}
.nav h2 {
  padding: 19px 12px 7px;
  font-size: 11px;
  line-height: 14px;
  font-weight: 700;
  letter-spacing: 0.05em;
  color: var(--muted);
}
.nav a {
  display: flex;
  align-items: center;
  gap: 12px;
  padding: 6px 10px 5px;
  margin-bottom: 2px;
  border-radius: 8px;
  color: var(--muted);
  text-decoration: none;
}
.nav-text {
  flex: 1;
  min-width: 0;
}
.nav b, .nav small {
  display: block;
  overflow: hidden;
  text-overflow: ellipsis;
  white-space: nowrap;
}
.nav b {
  font-size: 14px;
  line-height: 18px;
  font-weight: 500;
  letter-spacing: 0;
  color: var(--ink);
}
.nav small {
  margin-top: 1px;
  font-size: 11px;
  line-height: 17px;
}
.nav .active {
  background: var(--primary-soft);
}
.nav .active .icon {
  color: var(--primary);
}
.nav .active b {
  color: var(--primary-dark);
}
.count {
  background: var(--red);
  color: #fff;
  font-size: 10px;
  line-height: 16px;
  font-weight: 700;
  min-width: 18px;
  border-radius: 8px;
  text-align: center;
}
.version {
  padding: 11px 8px;
  font-size: 11px;
  letter-spacing: 0;
  color: var(--muted);
}

/* top bar */
.topbar {
  display: flex;
  align-items: center;
  height: 52px;
  padding: 0 22px 0 20px;
  background: #fff;
  border-bottom: 1px solid var(--outline);
}
.topbar > .icon {
  color: var(--primary);
}
.topbar-title {
  flex: 1;
  padding-left: 10px;
  font-size: 16px;
  font-weight: 500;
}
.alert-pill {
  display: flex;
  align-items: center;
  gap: 6px;
  height: 30px;
  padding: 0 11px;
  margin-right: 22px;
  border: 1px solid #e8b3b4;
  border-radius: 15px;
  background: #fce8e9;
  color: var(--red);
  font-size: 13px;
  font-weight: 700;
  letter-spacing: 0;
}
.alert-pill .icon {
  width: 16px;
  height: 16px;
}

.page {
  display: grid;
  grid-template-columns: minmax(0, 1fr) 430px;
  gap: 28px;
  align-items: start;
  padding: 16px 16px 16px 20px;
}

/* main column */
.main h1 {
  padding-top: 5px;
  font-size: 22px;
  line-height: 26px;
  font-weight: 500;
}
.lead {
  margin: 3px 0 18px;
  line-height: 19px;
  letter-spacing: 0;
  color: var(--muted);
}
.card {
  background: #fff;
  border: 1px solid var(--line);
  border-radius: 12px;
  padding: 19px;
  margin-bottom: 14px;
}
.card.roomy {
  padding-bottom: 23px;
}
.label {
  padding-top: 2px;
  font-size: 11px;
  line-height: 14px;
  font-weight: 700;
  letter-spacing: 0.06em;
  color: var(--muted);
}
.text-btn {
  height: 40px;
  min-width: 64px;
  margin: 4px 0;
  padding: 0 12px;
  font-weight: 500;
  letter-spacing: 0;
  color: var(--primary);
}
.text-btn.danger {
  color: var(--red);
}

.card.needs {
  padding-bottom: 11px;
}
.needs-head {
  display: flex;
  align-items: center;
  justify-content: space-between;
  margin-bottom: 4px;
}
.ready {
  display: flex;
  align-items: center;
  gap: 4px;
  height: 24px;
  padding: 0 7px;
  border: 1px solid #a6c9c5;
  border-radius: 12px;
  background: #e7f1ec;
  color: var(--green);
  font-size: 11px;
  font-weight: 700;
}
.ready .icon {
  width: 13px;
  height: 13px;
}
.needs li {
  display: flex;
  align-items: center;
  gap: 12px;
  padding: 8px 0;
  border-bottom: 2px solid #f5f6f8;
}
.needs li:last-child {
  border-bottom: 0;
}
.needs li > .icon {
  width: 22px;
  height: 22px;
  color: var(--green);
}
.needs h3 {
  font-weight: 500;
}
.needs p {
  font-size: 13px;
  letter-spacing: 0;
  color: var(--muted);
}

.key-row {
  display: flex;
  align-items: center;
  margin-top: 12px;
}
.key-row .icon {
  width: 22px;
  height: 22px;
  margin-right: 8px;
  color: var(--green);
}
.model-row {
  display: flex;
  align-items: flex-end;
  gap: 16px;
  margin-top: 16px;
}
.quality {
  padding-bottom: 4px;
  font-size: 12px;
  line-height: 17px;
  color: var(--muted);
}
.toggle {
  display: flex;
  height: 40px;
  margin-top: 8px;
  border: 1px solid var(--outline);
  border-radius: 20px;
  overflow: hidden;
}
.toggle button {
  width: 68px;
  font-size: 14px;
  font-weight: 500;
  letter-spacing: 0;
  color: var(--ink);
}
.toggle button[aria-pressed="true"] {
  background: var(--primary-soft);
  border-left: 1px solid var(--outline);
  color: var(--primary-dark);
}

.field {
  position: relative;
  display: flex;
  align-items: center;
  border: 1px solid var(--outline);
  border-radius: 4px;
}
.field label {
  position: absolute;
  top: -8px;
  left: 11px;
  padding: 0 4px;
  background: #fff;
  font-size: 12px;
  line-height: 16px;
  letter-spacing: 0.03em;
  color: var(--muted);
}
.field input, .field select, .field textarea {
  flex: 1;
  min-width: 0;
  height: 46px;
  padding: 0 15px;
  border: 0;
  outline: 0;
  background: none;
  font-size: 16px;
  line-height: 24px;
  letter-spacing: 0.03em;
}
.field select {
  appearance: none;
  letter-spacing: 0.012em;
}
.field textarea {
  height: 126px;
  padding: 16px 15px 14px;
  resize: none;
}
.field ::placeholder {
  color: var(--muted);
}
.field .arrow {
  position: absolute;
  right: 11px;
  width: 24px;
  height: 24px;
  color: #565f6e;
  pointer-events: none;
}
.helper {
  display: flex;
  padding: 4px 16px 0;
  font-size: 12px;
  line-height: 16px;
  letter-spacing: 0.03em;
  color: var(--muted);
}
.helper span:last-child {
  margin-left: auto;
}
.hint {
  margin: 6px 0 14px;
  font-size: 13px;
  line-height: 18px;
  letter-spacing: 0;
  color: var(--muted);
}
.themes-title {
  margin: 8px 0 14px;
  font-size: 13px;
  line-height: 16px;
  font-weight: 700;
}
.chips {
  display: flex;
  flex-wrap: wrap;
  gap: 8px;
}
.chip {
  display: flex;
  align-items: center;
  height: 38px;
  padding: 0 16px;
  border: 1px solid var(--outline);
  border-radius: 8px;
  font-weight: 500;
  letter-spacing: 0;
  color: var(--muted);
}
.chip.removable {
  gap: 10px;
  padding-right: 8px;
}
.chip.selected {
  gap: 10px;
  padding-left: 9px;
  border-color: var(--primary-soft);
  background: var(--primary-soft);
  color: var(--primary-dark);
}
.chip.selected .icon {
  width: 18px;
  height: 18px;
}
.new-theme {
  width: 260px;
  margin-top: 13px;
}
.new-theme input {
  padding-right: 0;
}
.new-theme button {
  padding: 0 13px;
  color: var(--muted);
}
.actions {
  display: flex;
  justify-content: flex-end;
  margin-top: 18px;
}
.pill-btn {
  display: flex;
  align-items: center;
  gap: 8px;
  height: 40px;
  padding: 0 24px;
  border-radius: 20px;
  font-weight: 500;
  letter-spacing: 0.007em;
}
.pill-btn:disabled {
  padding: 0 23px;
  border: 1px solid #d3d6dd;
  background: #e8ebef;
  color: #868e9c;
  cursor: default;
}
.pill-btn.tonal {
  padding-left: 16px;
  background: var(--primary-soft);
  color: var(--primary-dark);
}
.pill-btn.tonal .icon {
  width: 18px;
  height: 18px;
}

.feature {
  display: flex;
  align-items: center;
  gap: 14px;
}
.feature .grow {
  padding-top: 2px;
}
.feature h2 {
  font-size: 16px;
  line-height: 22px;
  font-weight: 500;
}
.feature p {
  font-size: 13px;
  letter-spacing: 0;
  color: var(--muted);
}
.tile {
  display: grid;
  place-items: center;
  width: 44px;
  height: 44px;
  border-radius: 12px;
  color: #fff;
}
.tile .icon {
  width: 24px;
  height: 24px;
}
.tile.green {
  background: var(--green);
}
.tile.insta {
  background: linear-gradient(45deg, #cf7d5a 35%, #e32b86 35%, #e32b86 73%, #b4286b 74%, #b4286b 76%, #a768d8 76%);
}
.switch {
  appearance: none;
  width: 52px;
  height: 32px;
  padding: 4px;
  border-radius: 16px;
  background: #8a919e;
  cursor: pointer;
}
.switch::before {
  content: "";
  display: block;
  width: 24px;
  height: 24px;
  border-radius: 50%;
  background: #fff;
}
.switch:checked {
  background: var(--primary);
}
.switch:checked::before {
  margin-left: auto;
}

.card.schedule {
  padding: 0;
  overflow: hidden;
}
.schedule-head {
  padding: 17px 19px 18px;
  background: linear-gradient(135deg, #e5f3ea, #f3f8f5);
}
.schedule-body {
  padding: 20px 19px 23px;
}
.freq {
  margin: 15px 0 25px;
}
.publish {
  display: flex;
  align-items: center;
  margin: 8px 0 24px;
  padding: 12px;
  border-radius: 8px;
  background: #f2f6fd;
}
.publish .icon {
  width: 24px;
  height: 24px;
  margin-right: 10px;
  color: var(--primary);
}
.publish h4 {
  font-weight: 500;
}
.publish p {
  font-size: 13px;
  line-height: 18px;
  letter-spacing: 0;
  color: var(--muted);
}

.card.instagram {
  padding-top: 21px;
}
.instagram .switch {
  margin-right: 4px;
}
.instagram .label {
  margin: 20px 0 2px;
}
.option {
  display: flex;
  align-items: center;
  gap: 26px;
  padding: 12px 10px;
}
.option input {
  appearance: none;
  flex: none;
  width: 20px;
  height: 20px;
  border: 2px solid var(--muted);
  border-radius: 50%;
}
.option input:checked {
  border-color: var(--primary);
  background: radial-gradient(var(--primary) 5px, #fff 6px);
}
.option b, .option small {
  display: block;
}
.option b {
  font-size: 16px;
  line-height: 22px;
  font-weight: 400;
  letter-spacing: 0.03em;
}
.option small {
  font-size: 14px;
  color: var(--muted);
}
.hashtags {
  margin-top: 14px;
}
.hashtags .icon {
  width: 22px;
  height: 22px;
  margin-left: 12px;
  color: var(--muted);
}
.hashtags input {
  padding-left: 17px;
}
.instagram .actions {
  margin-top: 4px;
}

/* setup guide */
.guide {
  position: sticky;
  top: 16px;
  height: calc(100vh - 84px);
  padding: 15px;
  border: 1px solid #e0eefa;
  border-radius: 12px;
  background: #f0f4fa;
}
.guide-scroll {
  height: 100%;
  padding-right: 3px;
  overflow: hidden;
}
.guide-bar {
  position: absolute;
  top: 15px;
  right: 7px;
  width: 4px;
  height: 76%;
  background: #bdbdbd;
}
.guide-title {
  display: flex;
  align-items: center;
  gap: 8px;
  padding-top: 1px;
  font-size: 12px;
  line-height: 18px;
  font-weight: 700;
  letter-spacing: 0.006em;
  color: var(--primary-dark);
}
.guide-title .icon {
  width: 18px;
  height: 18px;
}
.guide p, .guide li, .guide a {
  font-size: 12px;
  line-height: 18px;
  color: var(--muted);
}
.guide .guide-intro {
  margin: 6px 0 12px;
  line-height: 17px;
}
.before {
  padding: 9px 15px 13px 10px;
  border: 1px solid #e0eefa;
  border-radius: 8px;
  background: #fcfdff;
}
.before h3 {
  margin-bottom: 6px;
  font-size: 11px;
  line-height: 14px;
  font-weight: 700;
  letter-spacing: 0;
  color: var(--primary-dark);
}
.guide .before li {
  position: relative;
  padding-left: 12px;
  line-height: 17px;
  letter-spacing: 0;
}
.before li + li {
  margin-top: 5px;
}
.before li::before {
  content: "";
  position: absolute;
  left: 0;
  top: 6px;
  width: 5px;
  height: 5px;
  border-radius: 50%;
  background: var(--muted);
}
.part {
  margin-top: 22px;
}
.before + .part {
  margin-top: 15px;
}
.part > h3 {
  display: flex;
  align-items: center;
  gap: 8px;
  font-size: 14px;
  font-weight: 500;
  letter-spacing: 0;
}
.part > p {
  margin: 6px -3px 0 0;
}
.part-tag {
  height: 20px;
  padding: 0 7px;
  border-radius: 4px;
  background: var(--primary-dark);
  color: #fff;
  font-size: 9px;
  font-weight: 900;
  letter-spacing: 0.03em;
}
.step {
  display: flex;
  gap: 10px;
  margin-top: 12px;
}
.step h4 {
  margin-bottom: 3px;
  font-size: 13px;
  line-height: 18px;
  font-weight: 700;
  letter-spacing: 0;
}
.dot {
  flex: none;
  display: grid;
  place-items: center;
  width: 22px;
  height: 22px;
  border: 1px solid #94c0de;
  border-radius: 50%;
  background: #fff;
  color: var(--primary-dark);
  font-size: 11px;
  font-weight: 700;
}
.dot .icon {
  width: 14px;
  height: 14px;
}
.step a {
  display: flex;
  align-items: center;
  gap: 4px;
  margin-top: 5px;
  color: var(--primary);
  text-decoration: none;
}
.step a span {
  text-decoration: underline;
}
.step a .icon {
  width: 13px;
  height: 13px;
}
.tip h4 {
  color: #14683a;
}
.tip .dot {
  border-color: #9aaeaa;
  background: #dae7e6;
  color: #14683a;
}
.warn h4 {
  color: var(--orange);
}
.warn .dot {
  border-color: #dfa486;
  background: #eedfdc;
  color: var(--orange);
}
.critical h4 {
  color: #c63d12;
}
.critical .dot {
  border-color: #dfa486;
  background: #eedfdc;
  color: #c63d12;
}
.fills {
  display: inline-block;
  margin: 6px 0 4px;
  padding: 0 7px;
  border-radius: 4px;
  background: #e2f0fc;
  color: var(--primary-dark);
  font-size: 11px;
  line-height: 20px;
  font-weight: 700;
  letter-spacing: 0;
}
```
